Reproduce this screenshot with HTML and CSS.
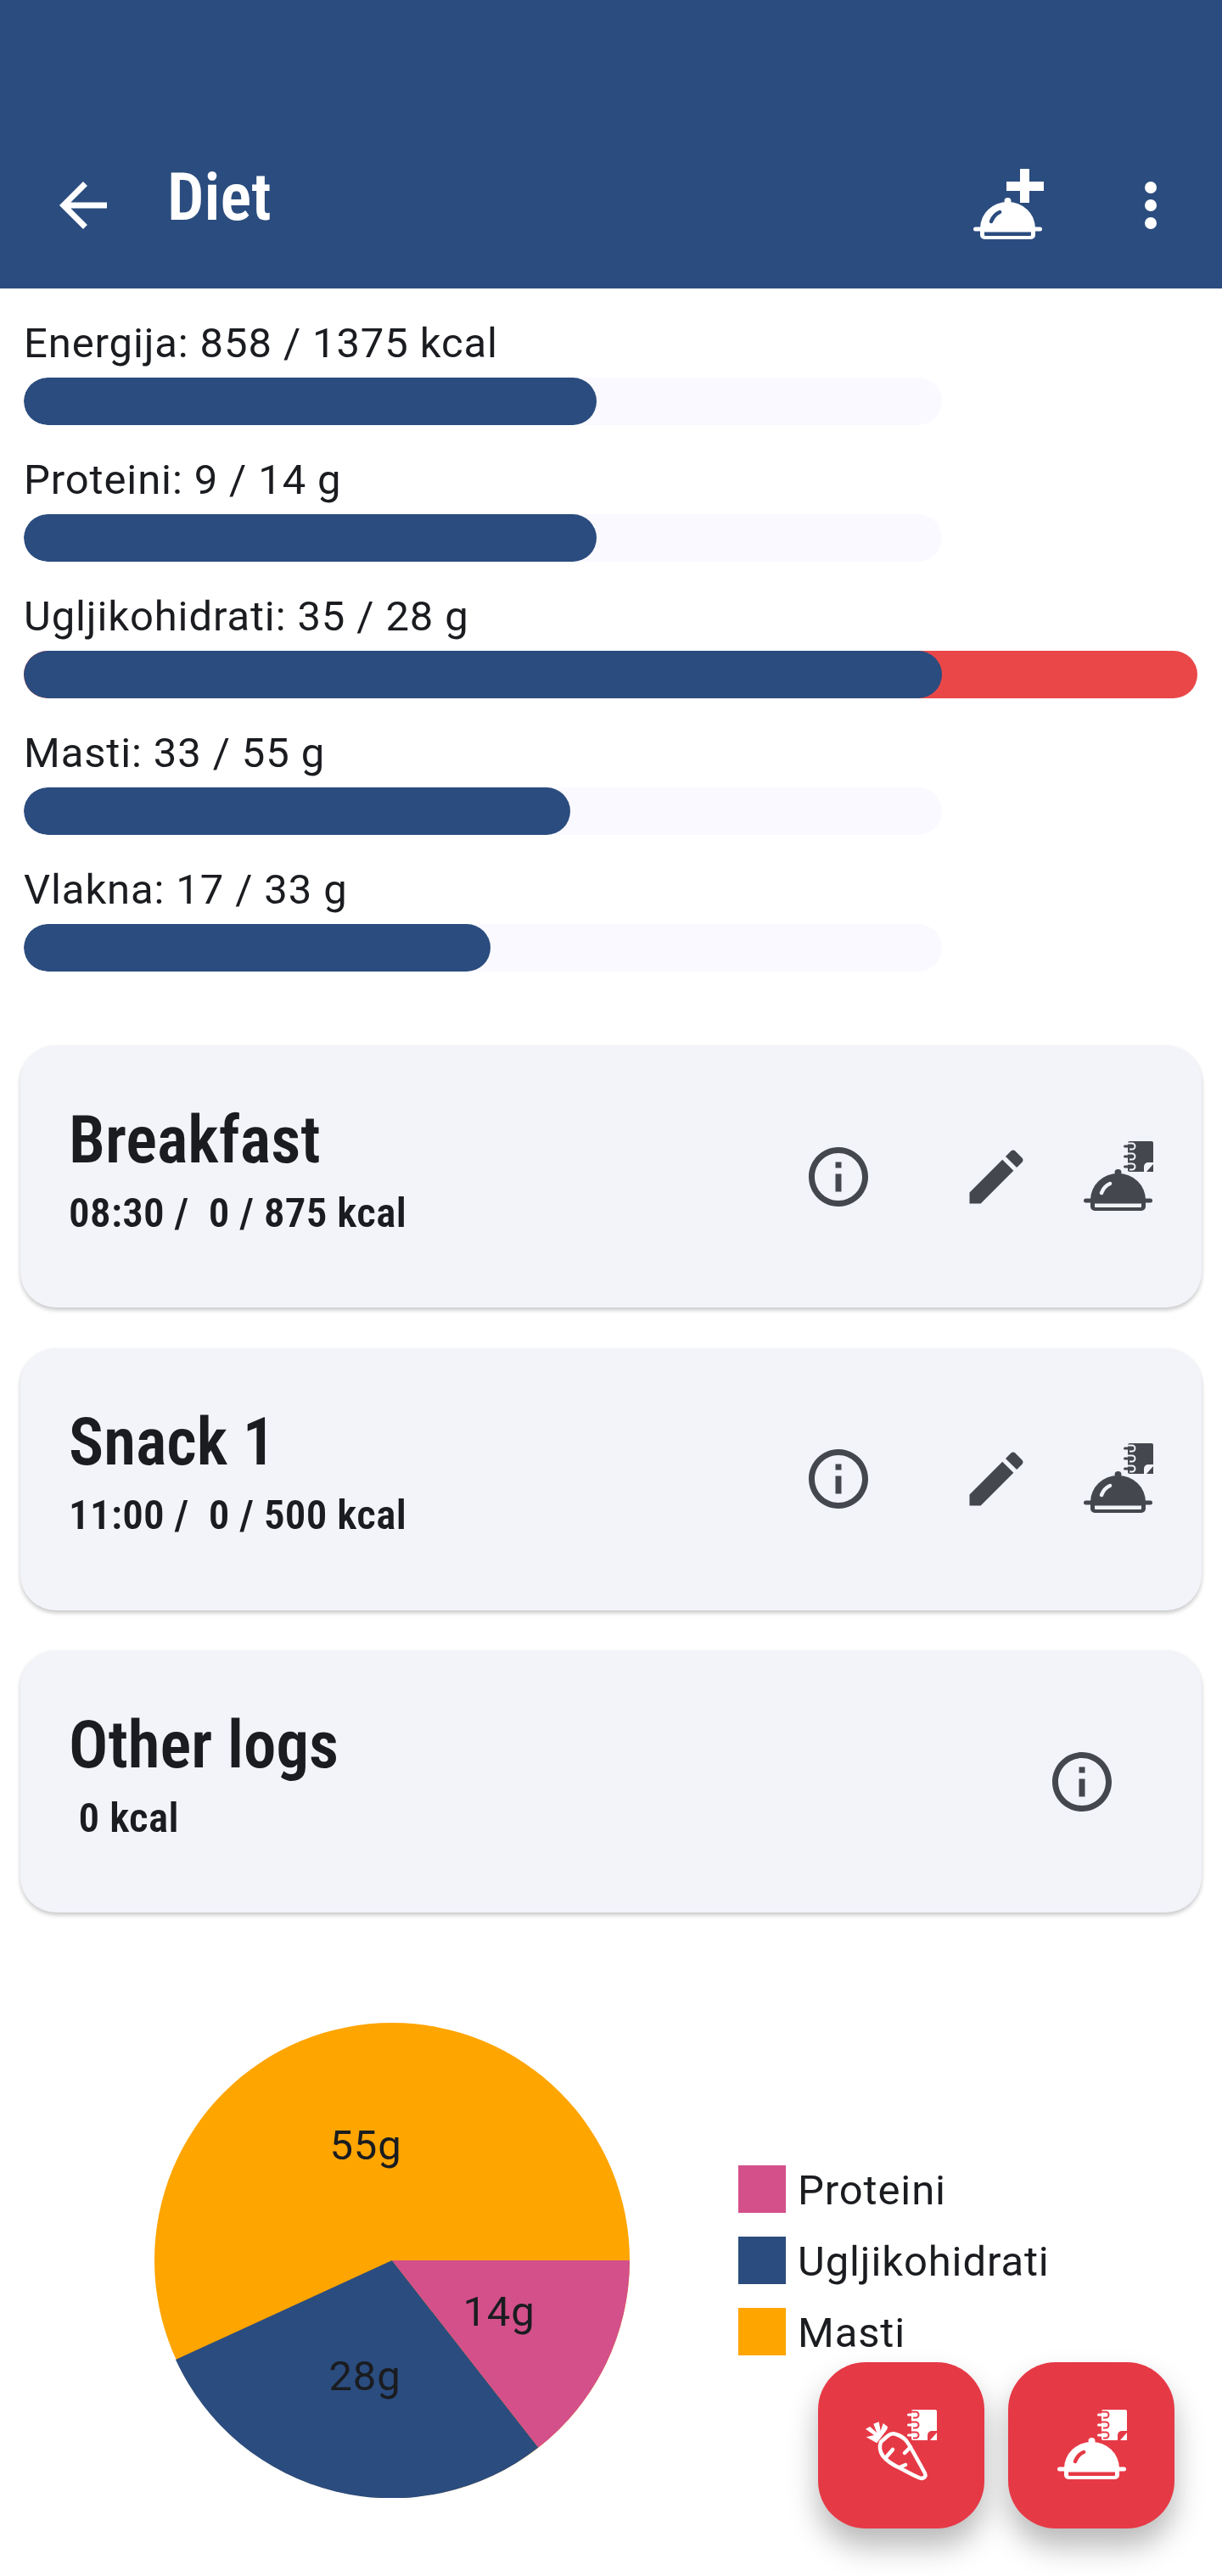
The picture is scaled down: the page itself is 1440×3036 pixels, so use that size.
FILE: index.html
```html
<!DOCTYPE html>
<html lang="hr">
<head>
  <meta charset="UTF-8">
  <title>Diet</title>
  <link rel="stylesheet" href="styles.css">
</head>
<body>

  <svg class="sprite" width="0" height="0">
    <defs>
      <mask id="clocheCut" maskUnits="userSpaceOnUse" x="0" y="0" width="84" height="84">
        <rect width="84" height="84" fill="#fff"/>
        <path d="M23 61Q26 53 33 50" fill="none" stroke="#000" stroke-width="4.5" stroke-linecap="round"/>
      </mask>
      <mask id="noteCut" maskUnits="userSpaceOnUse" x="0" y="0" width="84" height="84">
        <rect width="84" height="84" fill="#fff"/>
        <path d="M52 2.5h7a3.5 3.5 0 0 1 0 7h-3M52 14.5h7a3.5 3.5 0 0 1 0 7h-3M52 26.5h7a3.5 3.5 0 0 1 0 7h-3" fill="none" stroke="#000" stroke-width="2"/>
        <path d="M85 25h-7a5 5 0 0 0-5 5v7h12z" fill="#000"/>
      </mask>
      <path id="infoPath" d="M11 7h2v2h-2zm0 4h2v6h-2zm1-9C6.48 2 2 6.48 2 12s4.48 10 10 10 10-4.48 10-10S17.52 2 12 2zm0 18c-4.41 0-8-3.59-8-8s3.59-8 8-8 8 3.59 8 8-3.59 8-8 8z"/>
      <path id="editPath" d="M3 17.25V21h3.75L17.81 9.94l-3.75-3.75L3 17.25zM20.71 7.04c.39-.39.39-1.02 0-1.41l-2.34-2.34c-.39-.39-1.02-.39-1.41 0l-1.83 1.83 3.75 3.75 1.83-1.83z"/>
      <g id="cloche">
        <path mask="url(#clocheCut)" d="M10 69a32.5 31 0 0 1 65 0z"/>
        <circle cx="42.5" cy="37" r="4"/>
        <rect x="2" y="67.5" width="81" height="5" rx="2.5"/>
        <path fill-rule="evenodd" d="M10 70h65v7a5 5 0 0 1-5 5H15a5 5 0 0 1-5-5zM15 73.5v3.5a1 1 0 0 0 1 1h53a1 1 0 0 0 1-1v-3.5z"/>
      </g>
      <g id="note">
        <rect mask="url(#noteCut)" x="54" y="0" width="30" height="36" rx="2"/>
        <path d="M50.5 6h9M50.5 18h9M50.5 30h9" fill="none" stroke="currentColor" stroke-width="3" stroke-linecap="round"/>
        <path d="M84 27l-8 9h8z"/>
      </g>
      <g id="carrot">
        <path d="M18 38l8-7q5-4 10-2 9 3 13 9 3 4 21 37 2 5-4 6-3 0-25-12-14-6-21-15-5-8-2-16z" fill="none" stroke="currentColor" stroke-width="4.5" stroke-linejoin="round"/>
        <path d="M25 55l7-8M46 51l7-7M40 68l7-3" fill="none" stroke="currentColor" stroke-width="4.5" stroke-linecap="round"/>
        <path d="M.7 32.3L10 30 0 22.7 5.3 20l8 7.3-4-10.600 6.400-2.400 2 10.700 3-9 5.300 4-.7 3.300-12 16z"/>
      </g>
    </defs>
  </svg>

  <header class="app-bar">
    <svg class="icon" viewBox="0 0 24 24"><path d="M20 11H7.83l5.59-5.59L12 4l-8 8 8 8 1.41-1.41L7.83 13H20v-2z"/></svg>
    <h1 class="app-title">Diet</h1>
    <svg class="icon add-meal" viewBox="0 0 84 84">
      <use href="#cloche"/>
      <path d="M57-1h11v15h17v11H68v14H57V25H41V14h16z"/>
    </svg>
    <svg class="icon more" viewBox="0 0 24 24"><circle cx="12" cy="6" r="2"/><circle cx="12" cy="12" r="2"/><circle cx="12" cy="18" r="2"/></svg>
  </header>

  <section class="goals">
    <div class="goal">
      <p class="goal-label">Energija: 858 / 1375 kcal</p>
      <div class="bar"><div class="bar-fill" style="width: 62.4%"></div></div>
    </div>
    <div class="goal">
      <p class="goal-label">Proteini: 9 / 14 g</p>
      <div class="bar"><div class="bar-fill" style="width: 62.4%"></div></div>
    </div>
    <div class="goal">
      <p class="goal-label">Ugljikohidrati: 35 / 28 g</p>
      <div class="bar bar-over"><div class="bar-fill"></div></div>
    </div>
    <div class="goal">
      <p class="goal-label">Masti: 33 / 55 g</p>
      <div class="bar"><div class="bar-fill" style="width: 59.5%"></div></div>
    </div>
    <div class="goal">
      <p class="goal-label">Vlakna: 17 / 33 g</p>
      <div class="bar"><div class="bar-fill" style="width: 50.8%"></div></div>
    </div>
  </section>

  <section class="meals">
    <article class="card">
      <div class="card-text">
        <h2 class="card-title">Breakfast</h2>
        <p class="card-sub">08:30 /  0 / 875 kcal</p>
      </div>
      <svg class="icon info" viewBox="0 0 24 24"><use href="#infoPath"/></svg>
      <svg class="icon edit" viewBox="0 0 24 24"><use href="#editPath"/></svg>
      <svg class="icon" viewBox="0 0 84 84"><use href="#cloche"/><use href="#note"/></svg>
    </article>

    <article class="card">
      <div class="card-text">
        <h2 class="card-title">Snack 1</h2>
        <p class="card-sub">11:00 /  0 / 500 kcal</p>
      </div>
      <svg class="icon info" viewBox="0 0 24 24"><use href="#infoPath"/></svg>
      <svg class="icon edit" viewBox="0 0 24 24"><use href="#editPath"/></svg>
      <svg class="icon" viewBox="0 0 84 84"><use href="#cloche"/><use href="#note"/></svg>
    </article>

    <article class="card card-other">
      <div class="card-text">
        <h2 class="card-title">Other logs</h2>
        <p class="card-sub"> 0 kcal</p>
      </div>
      <svg class="icon" viewBox="0 0 24 24"><use href="#infoPath"/></svg>
    </article>
  </section>

  <section class="macros">
    <svg class="pie" viewBox="0 0 560 560">
      <circle cx="280" cy="280" r="280" fill="#ffa500"/>
      <path fill="#2b4c7e" d="M280 280L452.4 500.6A280 280 0 0 1 25 397z"/>
      <path fill="#d3508a" d="M280 280H560A280 280 0 0 1 452.4 500.6z"/>
      <text x="249" y="161" class="pie-text">55g</text>
      <text x="406" y="357" class="pie-text">14g</text>
      <text x="248" y="433" class="pie-text">28g</text>
    </svg>
    <ul class="legend">
      <li class="legend-item"><span class="swatch swatch-protein"></span><span class="legend-text">Proteini</span></li>
      <li class="legend-item"><span class="swatch swatch-carbs"></span><span class="legend-text">Ugljikohidrati</span></li>
      <li class="legend-item"><span class="swatch swatch-fat"></span><span class="legend-text">Masti</span></li>
    </ul>
  </section>

  <div class="fabs">
    <button class="fab">
      <svg class="icon" viewBox="0 0 84 84"><use href="#carrot"/><use href="#note"/></svg>
    </button>
    <button class="fab">
      <svg class="icon" viewBox="0 0 84 84"><use href="#cloche"/><use href="#note"/></svg>
    </button>
  </div>

</body>
</html>
```

FILE: styles.css
```css
html, body {
  height: 3036px;
}

body {
  position: relative;
  margin: 0;
  overflow: hidden;
  background: #fff;
  color: #1a1c20;
  font-family: Roboto, sans-serif;
}

.sprite {
  position: absolute;
}

.icon {
  display: block;
  flex: none;
  width: 84px;
  height: 84px;
  overflow: visible;
  fill: currentColor;
}

/* Top bar */
.app-bar {
  display: flex;
  align-items: center;
  height: 197px;
  padding: 143px 42px 0 56px;
  background: #2b4c7e;
  color: #fff;
}

.app-title {
  flex: 1;
  margin: 0 0 18px 57px;
  font-family: "Roboto Condensed", Roboto, sans-serif;
  font-stretch: condensed;
  font-size: 77px;
  font-weight: 600;
  line-height: 90px;
}

.add-meal {
  margin-right: 85px;
}

/* Progress bars */
.goals {
  padding: 0 28px;
}

.goal {
  height: 161px;
}

.goal-label {
  height: 67px;
  margin: 0;
  padding-top: 38px;
  font-size: 49px;
  letter-spacing: 0.875px;
  line-height: 54px;
}

.bar {
  width: 1082px;
  height: 56px;
  border-radius: 28px;
  background: #faf9ff;
  overflow: hidden;
}

.bar-fill {
  height: 100%;
  border-radius: 28px;
  background: #2b4c7e;
}

.bar-over {
  width: 1383px;
  background: #ea4748;
}

.bar-over .bar-fill {
  width: 1082px;
}

/* Meal cards */
.meals {
  display: flex;
  flex-direction: column;
  gap: 47.5px;
  margin-top: 87px;
  padding: 0 24px;
}

.card {
  display: flex;
  align-items: center;
  height: 309px;
  padding: 0 57px;
  border-radius: 42px;
  background: #f2f4fa;
  color: #44474e;
  box-shadow: 0 3px 5px rgba(0, 0, 0, 0.22);
}

.card-other {
  padding-right: 99px;
}

.card-text {
  flex: 1;
  margin-top: -18px;
  color: #1a1c20;
  font-family: "Roboto Condensed", Roboto, sans-serif;
  font-stretch: condensed;
  font-weight: 600;
}

.card-title {
  margin: 0;
  font-size: 77px;
  font-weight: 600;
  line-height: 90px;
}

.card-sub {
  margin: 14px 0 0;
  font-size: 49px;
  letter-spacing: 0.3px;
  line-height: 54px;
  white-space: pre;
}

.info {
  margin-right: 102px;
}

.edit {
  margin-right: 59px;
}

/* Pie chart */
.macros {
  display: flex;
  align-items: center;
  margin-top: 130px;
  padding-left: 182px;
}

.pie {
  display: block;
  width: 560px;
  height: 560px;
}

.pie-text {
  fill: #1a1c20;
  font-size: 49px;
  letter-spacing: 0.875px;
  text-anchor: middle;
}

.legend {
  display: flex;
  flex-direction: column;
  gap: 28px;
  margin: 0 0 0 128px;
  padding: 0;
  list-style: none;
}

.legend-item {
  display: flex;
  align-items: center;
  gap: 14px;
  font-size: 49px;
  letter-spacing: 0.875px;
}

.legend-text {
  padding-top: 4px;
  line-height: 50px;
}

.swatch {
  width: 56px;
  height: 56px;
}

.swatch-protein {
  background: #d3508a;
}

.swatch-carbs {
  background: #2b4c7e;
}

.swatch-fat {
  background: #ffa500;
}

/* Floating buttons */
.fabs {
  position: absolute;
  top: 2784px;
  right: 56px;
  display: flex;
  gap: 28px;
}

.fab {
  display: flex;
  align-items: center;
  justify-content: center;
  width: 196px;
  height: 196px;
  padding: 0;
  border: 0;
  border-radius: 56px;
  background: #e63946;
  color: #fff;
  box-shadow: 0 21px 35px rgba(0, 0, 0, 0.28);
}
```
